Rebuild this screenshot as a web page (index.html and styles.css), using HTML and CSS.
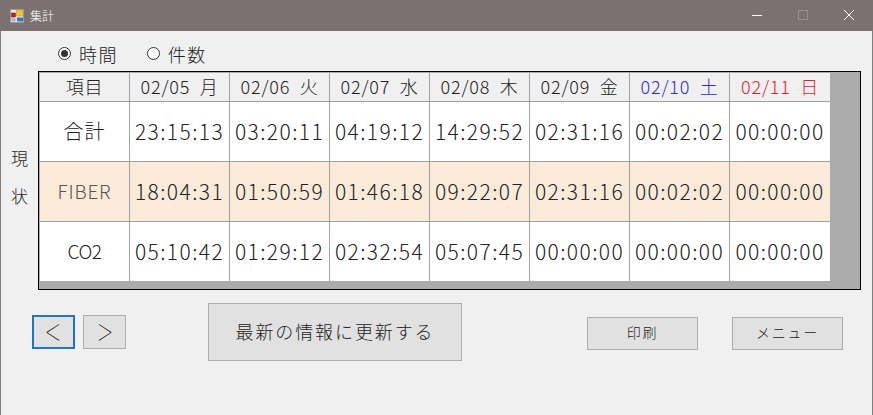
FILE: index.html
```html
<!DOCTYPE html>
<html lang="ja">
<head>
    <meta charset="UTF-8">
    <title>集計</title>
    <link rel="stylesheet" href="styles.css">
</head>
<body>
    <div class="window">
        <header class="titlebar">
            <svg class="app-icon" width="14" height="14" viewBox="0 0 14 14">
                <rect x="0.5" y="0.5" width="13" height="13" fill="#e8e8e8" stroke="#9a9a9a"/>
                <rect x="6.5" y="1" width="6.5" height="6" fill="#f2c62a" stroke="#b8962a" stroke-width="0.5"/>
                <rect x="1.5" y="4" width="4" height="4" fill="#c02020" stroke="#801010" stroke-width="0.5"/>
                <rect x="7" y="8.5" width="6" height="4" fill="#3a70c8"/>
                <rect x="1.5" y="9" width="4" height="3.5" fill="#b4b4b4"/>
            </svg>
            <span class="title">集計</span>
            <div class="win-buttons">
                <svg width="46" height="31" viewBox="0 0 46 31"><path d="M18 15.5h10" stroke="#fff" stroke-width="1"/></svg>
                <svg width="46" height="31" viewBox="0 0 46 31"><rect x="18.5" y="10.5" width="9" height="9" fill="none" stroke="#96908f"/></svg>
                <svg width="46" height="31" viewBox="0 0 46 31"><path d="M18 10l10 10M28 10l-10 10" stroke="#fff" stroke-width="1"/></svg>
            </div>
        </header>

        <main class="content">
            <div class="radios">
                <label class="radio"><span class="dot checked"></span>時間</label>
                <label class="radio"><span class="dot"></span>件数</label>
            </div>

            <div class="middle">
                <div class="side-label"><span>現</span><span>状</span></div>
                <div class="grid-box">
                    <table class="grid">
                        <thead>
                            <tr>
                                <th>項目</th>
                                <th>02/05&nbsp;&nbsp;月</th>
                                <th>02/06&nbsp;&nbsp;火</th>
                                <th>02/07&nbsp;&nbsp;水</th>
                                <th>02/08&nbsp;&nbsp;木</th>
                                <th>02/09&nbsp;&nbsp;金</th>
                                <th class="sat">02/10&nbsp;&nbsp;土</th>
                                <th class="sun">02/11&nbsp;&nbsp;日</th>
                            </tr>
                        </thead>
                        <tbody>
                            <tr>
                                <td class="name total">合計</td>
                                <td>23:15:13</td><td>03:20:11</td><td>04:19:12</td><td>14:29:52</td><td>02:31:16</td><td>00:02:02</td><td>00:00:00</td>
                            </tr>
                            <tr class="alt">
                                <td class="name">FIBER</td>
                                <td>18:04:31</td><td>01:50:59</td><td>01:46:18</td><td>09:22:07</td><td>02:31:16</td><td>00:02:02</td><td>00:00:00</td>
                            </tr>
                            <tr>
                                <td class="name">CO2</td>
                                <td>05:10:42</td><td>01:29:12</td><td>02:32:54</td><td>05:07:45</td><td>00:00:00</td><td>00:00:00</td><td>00:00:00</td>
                            </tr>
                        </tbody>
                    </table>
                </div>
            </div>

            <div class="actions">
                <div class="pager">
                    <button class="btn btn-page focused">&lt;</button>
                    <button class="btn btn-page">&gt;</button>
                </div>
                <button class="btn btn-refresh">最新の情報に更新する</button>
                <div class="right-buttons">
                    <button class="btn btn-small">印刷</button>
                    <button class="btn btn-small">メニュー</button>
                </div>
            </div>
        </main>
    </div>
</body>
</html>
```

FILE: styles.css
```css
:root {
    --title: #7a7170;
    --surface: #f0f0f0;
    --btn: #e1e1e1;
    --btn-border: #adadad;
    --line: #a0a0a0;
    --text: #222;
}

* {
    box-sizing: border-box;
}

html, body {
    margin: 0;
    height: 100%;
    overflow: hidden;
}

body {
    font-family: "Noto Sans CJK JP", "Liberation Sans", sans-serif;
    font-weight: 300;
    color: var(--text);
    background: var(--surface);
}

.window {
    height: 415px;
    display: flex;
    flex-direction: column;
    border-left: 1px solid #7f7f7f;
    border-right: 1px solid #7f7f7f;
}

.titlebar {
    height: 31px;
    flex: none;
    display: flex;
    align-items: center;
    background: var(--title);
    color: #fff;
    padding-left: 10px;
    margin: 0 -1px;
}

.title {
    margin-left: 6px;
    font-size: 12px;
}

.win-buttons {
    margin-left: auto;
    display: flex;
    margin-right: 1px;
}

.win-buttons svg {
    display: block;
}

.content {
    flex: 1;
    padding: 5px 11px 0 0;
}

.radios {
    display: flex;
    gap: 29px;
    padding-left: 57px;
    height: 35px;
    align-items: center;
}

.radio {
    display: flex;
    align-items: center;
    gap: 8px;
    font-size: 18px;
    letter-spacing: 1.4px;
}

.dot {
    width: 13px;
    height: 13px;
    border: 1px solid #333;
    border-radius: 50%;
    background: #fff;
    display: flex;
    align-items: center;
    justify-content: center;
}

.dot.checked::after {
    content: "";
    width: 7px;
    height: 7px;
    border-radius: 50%;
    background: #333;
}

.middle {
    display: flex;
}

.side-label {
    width: 37px;
    display: flex;
    flex-direction: column;
    align-items: center;
    justify-content: center;
    gap: 18px;
    font-size: 17px;
    line-height: 20px;
    padding-bottom: 7px;
}

.grid-box {
    width: 823px;
    height: 219px;
    border: 1px solid #000;
    padding: 1px 0 0 1px;
    background: #ababab;
}

.grid {
    border-collapse: separate;
    border-spacing: 0;
    table-layout: fixed;
    width: 790px;
}

.grid th, .grid td {
    width: 100px;
    padding: 0 0 2px;
    text-align: center;
    font-weight: 300;
    border-right: 1px solid var(--line);
    border-bottom: 1px solid var(--line);
    white-space: nowrap;
}

.grid th:first-child, .grid td:first-child {
    width: 90px;
}

.grid th:last-child, .grid td:last-child {
    border-right: none;
}

.grid th {
    height: 29px;
    background: var(--surface);
    font-size: 18px;
    line-height: 20px;
    letter-spacing: 0.8px;
}

.grid td {
    height: 60px;
    background: #fff;
    font-size: 21px;
    letter-spacing: 1.4px;
}

.grid tbody tr:last-child td {
    border-bottom: none;
    height: 59px;
}

.grid .alt td {
    background: #faebd9;
}

.grid .name {
    font-size: 19px;
    letter-spacing: -0.4px;
}

.grid .name.total {
    font-size: 20px;
    letter-spacing: 1px;
}

.grid .alt .name {
    font-size: 19px;
    color: #5a5650;
    letter-spacing: 0.8px;
}

.sat {
    color: #2a2ae0;
}

.sun {
    color: #e8202a;
}

.actions {
    display: flex;
    align-items: flex-start;
    padding-top: 13px;
}

.btn {
    font-family: inherit;
    font-weight: 300;
    color: var(--text);
    background: var(--btn);
    border: 1px solid var(--btn-border);
    padding: 0 0 3px;
}

.pager {
    display: flex;
    gap: 8px;
    margin: 12px 0 0 31px;
}

.btn-page {
    width: 43px;
    height: 34px;
    font-family: "Inter", "Liberation Sans", sans-serif;
    font-weight: 100;
    font-size: 32px;
    line-height: 28px;
    color: #111;
}

.focused {
    border: 2px solid #1a78c2;
}

.btn-refresh {
    width: 254px;
    height: 58px;
    margin-left: 82px;
    font-size: 18px;
    letter-spacing: 1.9px;
}

.right-buttons {
    display: flex;
    gap: 34px;
    margin: 14px 0 0 125px;
}

.btn-small {
    width: 111px;
    height: 33px;
    font-size: 14px;
    letter-spacing: 1.7px;
}
```
